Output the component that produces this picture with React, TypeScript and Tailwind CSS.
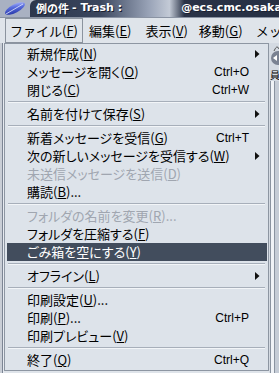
import React from 'react'

type Item =
  | { sep: true }
  | {
      sep?: false
      label: string
      key: string
      after?: string
      shortcut?: string
      sub?: boolean
      disabled?: boolean
      active?: boolean
    }

const items: Item[] = [
  { label: '新規作成', key: 'N', sub: true },
  { label: 'メッセージを開く', key: 'O', shortcut: 'Ctrl+O' },
  { label: '閉じる', key: 'C', shortcut: 'Ctrl+W' },
  { sep: true },
  { label: '名前を付けて保存', key: 'S', sub: true },
  { sep: true },
  { label: '新着メッセージを受信', key: 'G', shortcut: 'Ctrl+T' },
  { label: '次の新しいメッセージを受信する', key: 'W', sub: true },
  { label: '未送信メッセージを送信', key: 'D', disabled: true },
  { label: '購読', key: 'B', after: '...' },
  { sep: true },
  { label: 'フォルダの名前を変更', key: 'R', after: '...', disabled: true },
  { label: 'フォルダを圧縮する', key: 'F' },
  { label: 'ごみ箱を空にする', key: 'Y', active: true },
  { sep: true },
  { label: 'オフライン', key: 'L', sub: true },
  { sep: true },
  { label: '印刷設定', key: 'U', after: '...' },
  { label: '印刷', key: 'P', after: '...', shortcut: 'Ctrl+P' },
  { label: '印刷プレビュー', key: 'V' },
  { sep: true },
  { label: '終了', key: 'Q', shortcut: 'Ctrl+Q' },
]

const jp = "font-['Noto_Sans_CJK_JP','Noto_Sans',sans-serif]"

function Arrow({ light }: { light?: boolean }) {
  return (
    <svg width="5" height="8" viewBox="0 0 5 8">
      <path d="M0 0 L4.5 4 L0 8 Z" fill={light ? '#fff' : '#111'} />
    </svg>
  )
}

function MenuBarItem({ label, k, open, className = '' }: { label: string; k: string; open?: boolean; className?: string }) {
  return (
    <div
      className={`h-[25px] flex items-center px-[4px] text-[13px] text-black whitespace-nowrap ${
        open ? 'border border-[#8b939e]' : 'border border-transparent'
      } ${className}`}
    >
      <span>
        {label}(<u>{k}</u>)
      </span>
    </div>
  )
}

export default function App() {
  return (
    <div className={`w-[279px] h-[373px] overflow-hidden relative bg-[#dfe4ea] ${jp}`}>
      {/* title bar */}
      <div className="h-[17px] flex bg-[#b9c0cc]">
        <div className="w-[30px] flex items-center justify-center bg-[#a9b1c2]">
          <svg width="24" height="15" viewBox="0 0 24 15">
            <defs>
              <linearGradient id="fe" x1="0" y1="1" x2="1" y2="0">
                <stop offset="0" stopColor="#1b2a9a" />
                <stop offset="0.6" stopColor="#5a6ee0" />
                <stop offset="1" stopColor="#c8d0ff" />
              </linearGradient>
            </defs>
            <ellipse cx="12" cy="7.5" rx="11" ry="4.2" transform="rotate(-28 12 7.5)" fill="url(#fe)" />
            <path d="M3 13 L20 3" stroke="#e6eaff" strokeWidth="0.8" />
          </svg>
        </div>
        <div className="flex-1 flex items-center overflow-hidden rounded-tl-[6px] bg-[linear-gradient(90deg,#2c364b_0%,#3a465e_28%,#9aa4b8_48%,#c3cad6_56%,#2a3347_62%,#263044_100%)] pl-[6px] text-[11px] font-bold text-white font-['DejaVu_Sans',sans-serif] whitespace-nowrap [text-shadow:1px_1px_0_#1a2030]">
          <span className={jp}>例の件</span>
          <span className="ml-[3px]">- Trash :</span>
          <span className="ml-[59px]">@ecs.cmc.osaka-u.</span>
        </div>
      </div>

      {/* menu bar */}
      <div className="h-[26px] flex items-center pl-[5px] border-t border-[#8a93a3] bg-[#dfe4ea]">
        <MenuBarItem label="ファイル" k="F" open />
        <MenuBarItem label="編集" k="E" className="ml-[1px]" />
        <MenuBarItem label="表示" k="V" className="ml-[4px]" />
        <MenuBarItem label="移動" k="G" className="ml-[1px]" />
        <div className="text-[13px] ml-[8px] whitespace-nowrap">メッセ</div>
      </div>

      {/* window body behind the menu */}
      <div className="flex h-[330px]">
        <div className="w-[4px] flex">
          <div className="w-[2px] bg-[#c9ced6]" />
          <div className="w-[1px] bg-[#7c8594]" />
          <div className="w-[1px] bg-[#e6eaf0]" />
        </div>
        <div className="flex-1" />
        <div className="w-[10px] flex flex-col bg-[#d4dae2]">
          <div className="h-[26px] flex items-center">
            <svg width="10" height="22" viewBox="0 0 10 22">
              <circle cx="9" cy="13" r="7" fill="#7a8292" />
              <path d="M4 13 L8 10 L8 16 Z" fill="#fff" />
              <path d="M5 6 Q8 -1 10 4" stroke="#555" fill="none" />
            </svg>
          </div>
          <div className="h-[12px] text-[10px] leading-[12px] text-black pl-[1px] overflow-hidden">員</div>
          <div className="flex-1 flex pl-[1px]">
            <div className="w-[1px] bg-[#8a93a0]" />
            <div className="w-[3px] bg-[#f0f3f7]" />
            <div className="w-[1px] bg-[#8a93a0]" />
            <div className="w-[4px] bg-[#c5ccd6]" />
          </div>
        </div>
      </div>

      {/* open file menu */}
      <div className="absolute left-[4px] top-[43px] w-[265px] border border-[#8d96a2] bg-[#dde3ea] pl-[2px] pr-[1px] py-[1px] [font-feature-settings:'palt']">
        {items.map((it, i) =>
          it.sep ? (
            <div key={i} className="h-[6px] flex flex-col justify-center pl-[1px] pr-[2px]">
              <div className="h-[1px] bg-[#a7afba]" />
              <div className="h-[1px] bg-[#f2f5f8]" />
            </div>
          ) : (
            <div
              key={i}
              className={`h-[18px] flex items-center text-[13px] whitespace-nowrap ${
                it.active ? 'bg-[#424d5d] text-white' : it.disabled ? 'text-[#a0a6b0]' : 'text-black'
              }`}
            >
              <div className="flex-1 pl-[20px]">
                {it.label}(<u>{it.key}</u>){it.after}
              </div>
              {it.shortcut && (
                <div className="text-[12px] font-['Liberation_Sans',Arial,sans-serif]">{it.shortcut}</div>
              )}
              <div className="w-[18px] flex items-center justify-end pr-[7px]">
                {it.sub && <Arrow light={it.active} />}
              </div>
            </div>
          )
        )}
      </div>
    </div>
  )
}
